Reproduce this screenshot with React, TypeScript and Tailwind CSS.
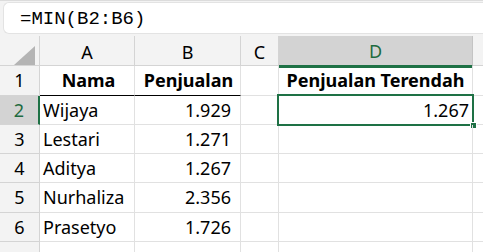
import React from "react";

const rows = [
  { n: 1, a: "Nama", b: "Penjualan", d: "Penjualan Terendah", head: true },
  { n: 2, a: "Wijaya", b: "1.929", d: "1.267" },
  { n: 3, a: "Lestari", b: "1.271", d: "" },
  { n: 4, a: "Aditya", b: "1.267", d: "" },
  { n: 5, a: "Nurhaliza", b: "2.356", d: "" },
  { n: 6, a: "Prasetyo", b: "1.726", d: "" },
  { n: 0, a: "", b: "", d: "" },
];

const heights = ["h-[30px]", "h-[29px]", "h-[29px]", "h-[29px]", "h-[30px]", "h-[29px]", "h-[29px]"];

export default function App() {
  return (
    <div className="w-[483px] h-[252px] overflow-hidden bg-white font-['Noto_Sans',sans-serif] text-[18px] text-black">
      {/* formula bar */}
      <div className="h-[36px] bg-[#f3f3f3] border-t border-[#dcdcdc] pt-[1px] pl-[3px]">
        <div className="h-[32px] bg-white rounded-l-[6px] border border-r-0 border-[#e3e3e3] flex items-center pl-[16px] pt-[2px] font-['Liberation_Mono',monospace] text-[19px]">
          =MIN(B2:B6)
        </div>
      </div>

      {/* column headers */}
      <div className="grid grid-cols-[40px_95px_106px_38px_194px_1fr] h-[30px] bg-[#f3f3f3] border-b border-[#d4d4d4]">
        <div className="border-r border-[#d4d4d4] flex items-end justify-end pr-[4px] pb-[3px]">
          <svg width="21" height="19" viewBox="0 0 21 19">
            <polygon points="21,0 21,19 0,19" fill="#b4b4b4" />
          </svg>
        </div>
        <div className="border-r border-[#d4d4d4] flex items-center justify-center">A</div>
        <div className="border-r border-[#d4d4d4] flex items-center justify-center">B</div>
        <div className="border-r border-[#d4d4d4] flex items-center justify-center">C</div>
        <div className="bg-[#d3d3d3] border-r border-[#c4c4c4] border-b-[3px] border-b-[#1e7145] flex items-center justify-center pt-[2px] text-[#1e6b40]">
          D
        </div>
        <div />
      </div>

      {/* rows */}
      {rows.map((r, i) => {
        const sel = r.n === 2;
        return (
          <div key={i} className={`grid grid-cols-[40px_95px_106px_38px_194px_1fr] ${heights[i]}`}>
            <div
              className={`flex items-center justify-center border-b border-[#d4d4d4] ${
                sel
                  ? "bg-[#d3d3d3] text-[#1e6b40] border-r-[2px] border-r-[#1e7145]"
                  : "bg-[#f3f3f3] border-r border-r-[#d4d4d4]"
              }`}
            >
              {r.n > 0 ? r.n : ""}
            </div>
            <div
              className={`flex items-center pl-[3px] border-r border-[#e1e1e1] ${
                r.head ? "justify-center font-bold border-b border-b-black" : "border-b"
              }`}
            >
              {r.a}
            </div>
            <div
              className={`flex items-center border-r border-[#e1e1e1] ${
                r.head ? "justify-center font-bold border-b border-b-black pl-[2px]" : "justify-end pr-[9px] border-b"
              }`}
            >
              {r.b}
            </div>
            <div className="border-r border-b border-[#e1e1e1]" />
            <div
              className={`relative flex items-center border-r border-b border-[#e1e1e1] ${
                r.head ? "justify-center font-bold" : "justify-end pr-[3px]"
              }`}
            >
              {sel && (
                <>
                  <div className="absolute left-[-2px] top-[-2px] right-[-2px] bottom-[-2px] border-2 border-[#1e7145]" />
                  <div className="absolute right-[-5px] bottom-[-5px] w-[7px] h-[7px] bg-[#1e7145] border border-white" />
                </>
              )}
              {r.d}
            </div>
            <div className="border-b border-[#e1e1e1]" />
          </div>
        );
      })}
    </div>
  );
}
